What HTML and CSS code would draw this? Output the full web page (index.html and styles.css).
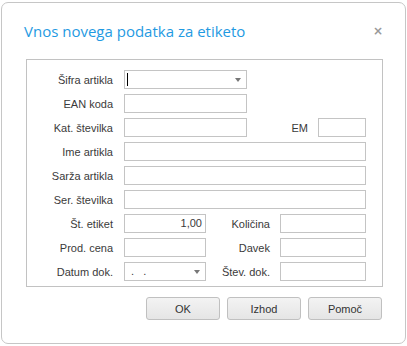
FILE: index.html
```html
<!DOCTYPE html>
<html lang="sl">
<head>
  <meta charset="UTF-8">
  <title>Vnos novega podatka za etiketo</title>
  <link rel="stylesheet" href="styles.css">
</head>
<body>
  <div class="dialog">
    <div class="dialog-header">
      <span class="dialog-title">Vnos novega podatka za etiketo</span>
      <span class="dialog-close">&times;</span>
    </div>

    <div class="group">
      <div class="row">
        <label class="lbl">Šifra artikla</label>
        <div class="field combo w-wide"><span class="caret"></span><span class="arrow"></span></div>
      </div>
      <div class="row">
        <label class="lbl">EAN koda</label>
        <div class="field w-wide"></div>
      </div>
      <div class="row">
        <label class="lbl">Kat. številka</label>
        <div class="field w-wide"></div>
        <label class="lbl2 lbl-em">EM</label>
        <div class="field w-em"></div>
      </div>
      <div class="row">
        <label class="lbl">Ime artikla</label>
        <div class="field w-full"></div>
      </div>
      <div class="row">
        <label class="lbl">Sarža artikla</label>
        <div class="field w-full"></div>
      </div>
      <div class="row">
        <label class="lbl">Ser. številka</label>
        <div class="field w-full"></div>
      </div>
      <div class="row">
        <label class="lbl">Št. etiket</label>
        <div class="field w-short num">1,00</div>
        <label class="lbl2">Količina</label>
        <div class="field w-right"></div>
      </div>
      <div class="row">
        <label class="lbl">Prod. cena</label>
        <div class="field w-short"></div>
        <label class="lbl2">Davek</label>
        <div class="field w-right"></div>
      </div>
      <div class="row">
        <label class="lbl">Datum dok.</label>
        <div class="field combo w-short date">.&nbsp;&nbsp;&nbsp;.<span class="arrow"></span></div>
        <label class="lbl2">Štev. dok.</label>
        <div class="field w-right"></div>
      </div>
    </div>

    <div class="buttons">
      <button type="button">OK</button>
      <button type="button">Izhod</button>
      <button type="button">Pomoč</button>
    </div>
  </div>
</body>
</html>
```

FILE: styles.css
```css
body {
  margin: 0;
  background-color: #ffffff;
  font-family: "Liberation Sans", Arial, sans-serif;
  font-size: 11px;
  color: #3a3a3a;
}
.dialog {
  box-sizing: border-box;
  width: 405px;
  height: 342px;
  margin: 2px 0 0 1px;
  border: 1px solid #c6c6c6;
  border-radius: 7px;
  background-color: #ffffff;
}
.dialog-header {
  display: flex;
  justify-content: space-between;
  align-items: center;
  height: 56px;
  padding: 0 22px 0 22px;
}
.dialog-title {
  font-family: "Open Sans", sans-serif;
  font-size: 15px;
  color: #1f9ae2;
}
.dialog-close {
  font-family: "DejaVu Sans", sans-serif;
  font-size: 12px;
  font-weight: bold;
  color: #999;
}
.group {
  margin: 0 22px 0 24px;
  border: 1px solid #c2c2c2;
  padding: 10px 0 5px 0;
}
.row {
  display: flex;
  align-items: center;
  height: 19px;
  margin-bottom: 5px;
}
.row:last-child {
  margin-bottom: 0;
}
.lbl {
  width: 86px;
  margin-right: 11px;
  text-align: right;
  white-space: nowrap;
}
.lbl2 {
  box-sizing: border-box;
  width: 74px;
  padding-right: 10px;
  text-align: right;
  white-space: nowrap;
}
.lbl-em {
  width: 71px;
}
.field {
  position: relative;
  box-sizing: border-box;
  height: 19px;
  border: 1px solid #c4c4c4;
  background-color: #fff;
}
.w-wide { width: 123px; }
.w-full { width: 242px; }
.w-em { width: 48px; }
.w-short { width: 82px; }
.w-right { width: 86px; }
.num {
  text-align: right;
  padding-right: 3px;
  line-height: 17px;
}
.date {
  padding-left: 6px;
  line-height: 17px;
}
.caret {
  position: absolute;
  left: 2px;
  top: 2px;
  width: 1px;
  height: 13px;
  background-color: #000;
}
.arrow {
  position: absolute;
  right: 5px;
  top: 7px;
  width: 0;
  height: 0;
  border-left: 3px solid transparent;
  border-right: 3px solid transparent;
  border-top: 4px solid #777;
}
.buttons {
  display: flex;
  justify-content: flex-end;
  gap: 7px;
  margin: 10px 23px 0 0;
}
button {
  width: 74px;
  height: 23px;
  border: 1px solid #c0c0c0;
  border-radius: 3px;
  background: linear-gradient(#f3f3f3, #e5e5e5);
  font-family: "Liberation Sans", Arial, sans-serif;
  font-size: 11px;
  color: #333;
  padding: 0;
}
```
